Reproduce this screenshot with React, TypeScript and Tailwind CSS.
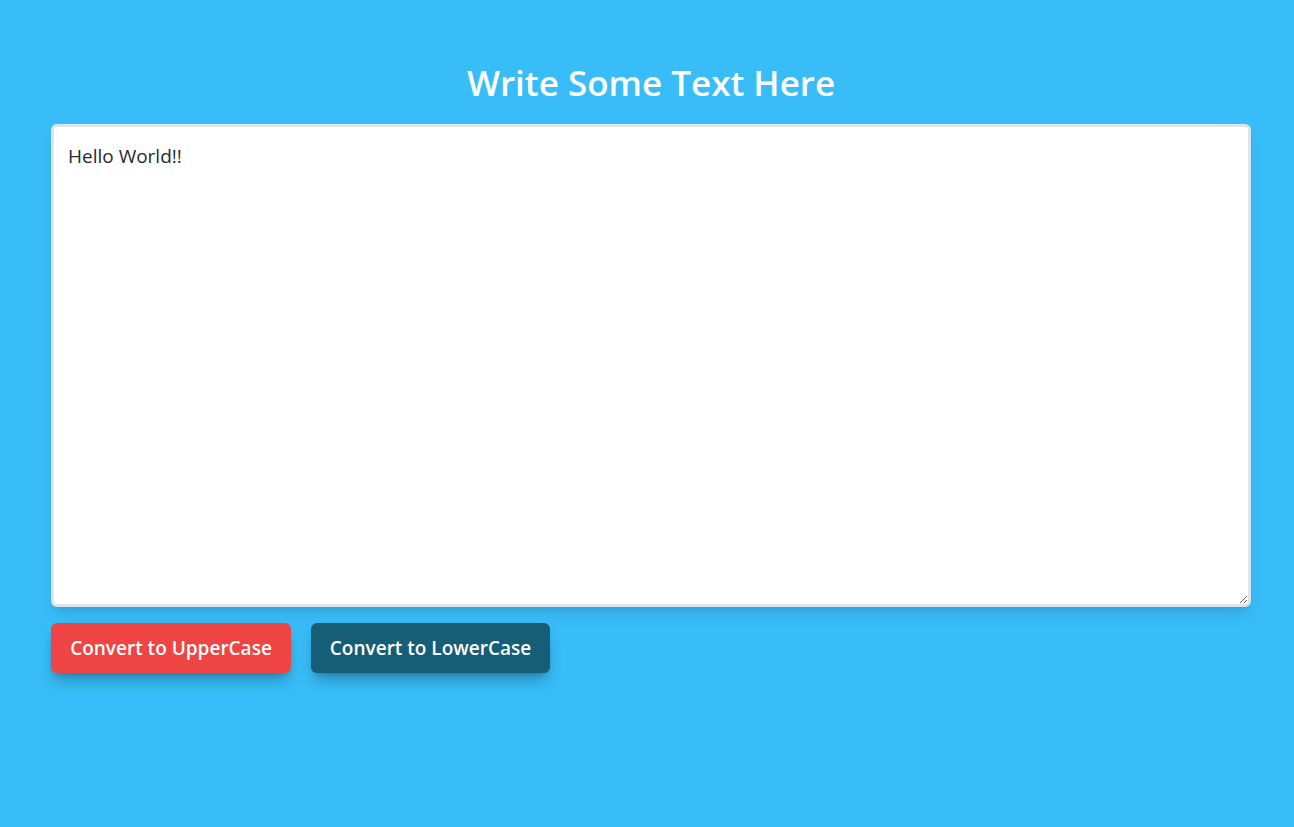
import { useState } from "react";

const App = () => {
  const [text, setText] = useState("Hello World!!");

  return (
    <div
      className="min-h-[827px] bg-[#38bdf8] pt-[63px]"
      style={{ fontFamily: '"Open Sans", "Noto Sans", sans-serif' }}
    >
      <div className="max-w-[1208px] mx-auto pl-2">
        <h1 className="text-center text-white text-[35px] font-semibold leading-[40px] mb-[21px]">
          Write Some Text Here
        </h1>
        <textarea
          value={text}
          onChange={(e) => setText(e.target.value)}
          className="block w-full h-[483px] bg-white rounded-md border-[3px] border-[#dfe3ea] shadow-lg px-[14px] py-[16px] text-[19px] leading-[26px] text-[#1f2937] outline-none"
        />
        <div className="flex gap-5 mt-4">
          <button
            onClick={() => setText(text.toUpperCase())}
            className="w-[240px] h-[50px] rounded-md bg-[#ef4444] text-white text-[19px] font-semibold shadow-lg shadow-black/25"
          >
            Convert to UpperCase
          </button>
          <button
            onClick={() => setText(text.toLowerCase())}
            className="w-[239px] h-[50px] rounded-md bg-[#155e75] text-white text-[19px] font-semibold shadow-lg shadow-black/25"
          >
            Convert to LowerCase
          </button>
        </div>
      </div>
    </div>
  );
};

export default App;
